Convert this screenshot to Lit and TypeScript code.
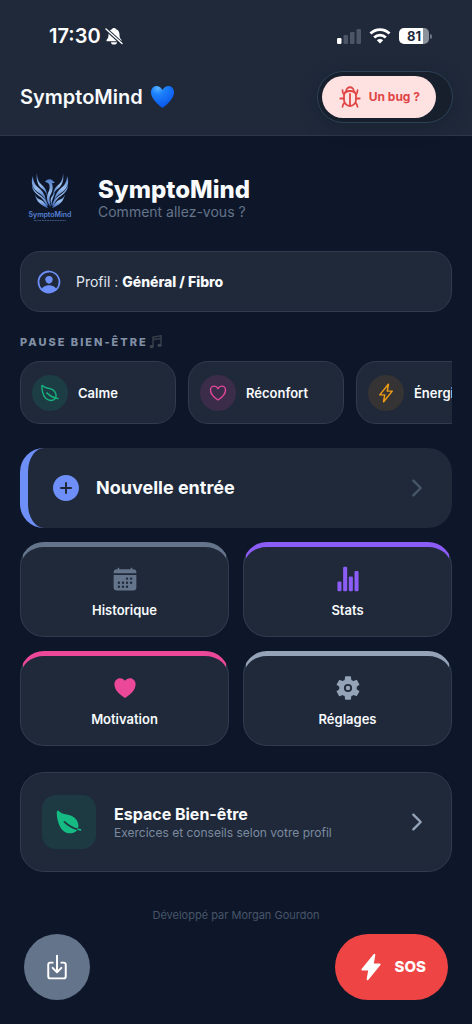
import { LitElement, html, css, svg } from "lit";
import { customElement, property } from "lit/decorators.js";
import { classMap } from "lit/directives/class-map.js";

const line = (d: string, width = 32) => svg`<path d=${d} fill="none" stroke="currentColor"
  stroke-width=${width} stroke-linecap="round" stroke-linejoin="round"></path>`;
const fill = (d: string) => svg`<path d=${d} fill="currentColor" fill-rule="evenodd"></path>`;
const dot = (x: number, y: number) => `M${x - 24} ${y}a24 24 0 1048 0a24 24 0 10-48 0z`;

const ICONS: Record<string, unknown> = {
  bug: svg`${line("M370 378c28.89 23.52 46 46.07 46 86M142 378c-28.89 23.52-46 46.06-46 86M384 208c28.89-23.52 32-56.07 32-96M128 206c-28.89-23.52-32-54.06-32-94M464 288.13h-80M128 288.13H48M256 192v256", 38)}
    ${line("M256 448h0c-70.4 0-128-57.6-128-128v-96.07c0-65.07 57.6-96 128-96h0c70.4 0 128 25.6 128 96V320c0 70.4-57.6 128-128 128z", 38)}
    ${line("M179.43 143.52A49.08 49.08 0 01176 127.79 80 80 0 01255.79 48h.42A80 80 0 01336 127.79a41.91 41.91 0 01-3.12 14.3", 38)}`,
  person: svg`${fill("M258.9 48C141.92 46.42 46.42 141.92 48 258.9c1.56 112.19 92.91 203.54 205.1 205.1 117 1.6 212.48-93.9 210.88-210.88C462.44 140.91 371.09 49.56 258.9 48zm126.42 327.25a4 4 0 01-6.14-.32 124.27 124.27 0 00-32.35-29.59C321.37 329 289.11 320 256 320s-65.37 9-90.83 25.34a124.24 124.24 0 00-32.35 29.58 4 4 0 01-6.14.32A175.32 175.32 0 0180 259c-1.63-97.31 78.22-178.76 175.57-179S432 158.81 432 256a175.32 175.32 0 01-46.68 119.25z")}
    ${fill("M125 378C150 336 200 318 256 318s106 18 131 60C350 415 305 434 256 434s-94-19-131-56z")}
    ${fill("M256 144c-19.72 0-37.55 7.39-50.22 20.82s-19 32-17.57 51.93C191.11 256 221.52 288 256 288s64.83-32 67.79-71.24c1.48-19.74-4.8-38.14-17.68-51.82C293.39 151.44 275.59 144 256 144z")}`,
  leafLine: line("M321.89 171.42C233 114 141 155.22 56 65.22c-19.8-21-8.3 235.5 98.1 332.7 77.79 71 197.9 63.08 238.4-5.92s18.28-163.17-70.61-220.58zM173 253c86 81 175 129 292 147", 36),
  leaf: svg`${fill("M161.35 242a16 16 0 0122.62-.68c73.63 69.36 147.51 111.56 234.45 133.07 11.73-32 12.77-67.22 2.64-101.58-13.44-45.59-44.74-85.31-90.49-114.86-40.84-26.38-81.66-33.25-121.15-39.89-49.82-8.38-96.88-16.3-141.79-63.85-5-5.26-11.81-7.37-18.32-5.66-7.44 2-12.43 7.88-14.82 17.6-5.6 22.75-2 86.51 13.75 153.82 25.29 108.14 65.65 162.86 95.06 189.73 38 34.69 87.62 53.9 136.93 53.9a186 186 0 0027.77-2.04c41.71-6.32 76.43-27.27 96-57.75-89.49-23.28-165.94-67.55-242-139.16a16 16 0 01-.65-22.65z")}
    ${fill("M467.43 384.19c-16.83-2.59-33.13-5.84-49-9.77a157.71 157.71 0 01-12.13 25.68c-.73 1.25-1.5 2.49-2.29 3.71a584.21 584.21 0 0058.56 12 16 16 0 104.87-31.62z")}`,
  heartLine: line("M352.92 80C288 80 256 144 256 144s-32-64-96.92-64c-52.76 0-94.54 44.14-95.08 96.81-1.1 109.33 86.73 187.08 183 252.42a16 16 0 0018 0c96.26-65.34 184.09-143.09 183-252.42-.54-52.67-42.32-96.81-95.08-96.81z", 36),
  heart: fill("M256 448a32 32 0 01-18-5.57c-78.59-53.35-112.62-89.93-131.39-112.8-40-48.75-59.15-98.8-58.61-153C48.63 114.52 98.46 64 159.08 64c44.08 0 74.61 24.83 92.39 45.51a6 6 0 009.06 0C278.31 88.81 308.84 64 352.92 64c60.62 0 110.45 50.52 111.08 112.64.54 54.21-18.63 104.26-58.61 153-18.77 22.87-52.8 59.45-131.39 112.8a32 32 0 01-18 5.56z"),
  flashLine: line("M315.27 33L96 304h128l-31.51 173.23a2.36 2.36 0 002.33 2.77h0a2.36 2.36 0 001.89-.95L416 208H288l31.66-173.25a2.45 2.45 0 00-2.44-2.75h0a2.42 2.42 0 00-1.95 1z", 38),
  flash: fill("M194.82 496a18.36 18.36 0 01-18.1-21.53v-.11L204.83 320H96a16 16 0 01-12.44-26.06L302.73 23a18.45 18.45 0 0132.8 13.71c0 .3-.08.59-.13.89L307.19 192H416a16 16 0 0112.44 26.06L209.24 489a18.45 18.45 0 01-14.42 7z"),
  add: fill("M256 48C141.31 48 48 141.31 48 256s93.31 208 208 208 208-93.31 208-208S370.69 48 256 48zm80 224h-64v64a16 16 0 01-32 0v-64h-64a16 16 0 010-32h64v-64a16 16 0 0132 0v64h64a16 16 0 010 32z"),
  chevron: line("M184 112l144 144-144 144", 48),
  stats: fill("M104 496H72a24 24 0 01-24-24V328a24 24 0 0124-24h32a24 24 0 0124 24v144a24 24 0 01-24 24zM328 496h-32a24 24 0 01-24-24V232a24 24 0 0124-24h32a24 24 0 0124 24v240a24 24 0 01-24 24zM440 496h-32a24 24 0 01-24-24V120a24 24 0 0124-24h32a24 24 0 0124 24v352a24 24 0 01-24 24zM216 496h-32a24 24 0 01-24-24V40a24 24 0 0124-24h32a24 24 0 0124 24v432a24 24 0 01-24 24z"),
  calendar: svg`${fill("M480 128a64 64 0 00-64-64h-16V48.45c0-8.61-6.62-16-15.23-16.43A16 16 0 00368 48v16H144V48.45c0-8.61-6.62-16-15.23-16.43A16 16 0 00112 48v16H96a64 64 0 00-64 64v12a4 4 0 004 4h440a4 4 0 004-4z")}
    ${fill(
      "M32 416a64 64 0 0064 64h320a64 64 0 0064-64V179a3 3 0 00-3-3H35a3 3 0 00-3 3z" +
        [[296, 248], [376, 248], [136, 328], [216, 328], [296, 328], [376, 328], [136, 408], [216, 408], [296, 408]]
          .map(([x, y]) => dot(x, y))
          .join("")
    )}`,
  settings: svg`${fill("M256 176a80 80 0 1080 80 80.24 80.24 0 00-80-80zm172.72 80a165.53 165.53 0 01-1.64 22.34l48.69 38.15a11.59 11.59 0 012.63 14.78l-46.06 79.52a11.64 11.64 0 01-14.14 4.93l-57.25-23a176.56 176.56 0 01-38.82 22.67l-8.56 60.78a11.93 11.93 0 01-11.51 9.86h-92.12a12 12 0 01-11.51-9.53l-8.56-60.78A169.3 169.3 0 01151.05 393L93.8 416a11.64 11.64 0 01-14.14-4.92L33.6 331.57a11.59 11.59 0 012.63-14.78l48.69-38.15A174.58 174.58 0 0183.28 256a165.53 165.53 0 011.64-22.34l-48.69-38.15a11.59 11.59 0 01-2.63-14.78l46.06-79.52a11.64 11.64 0 0114.14-4.93l57.25 23a176.56 176.56 0 0138.82-22.67l8.56-60.78A11.93 11.93 0 01209.94 26h92.12a12 12 0 0111.51 9.53l8.56 60.78A169.3 169.3 0 01361 119l57.2-23a11.64 11.64 0 0114.14 4.92l46.06 79.52a11.59 11.59 0 01-2.63 14.78l-48.69 38.15a174.58 174.58 0 011.64 22.63z")}
    <circle cx="256" cy="256" r="44" fill="currentColor"></circle>`,
  download: svg`${line("M336 176h40a40 40 0 0140 40v208a40 40 0 01-40 40H136a40 40 0 01-40-40V216a40 40 0 0140-40h40", 36)}
    ${line("M176 272l80 80 80-80M256 48v288", 36)}`,
};

@customElement("app-icon")
class AppIcon extends LitElement {
  @property() name = "";
  static styles = css`
    :host { display: block; flex: none; width: 24px; height: 24px; }
    svg { display: block; width: 100%; height: 100%; }
  `;
  render() {
    return html`<svg viewBox="0 0 512 512" aria-hidden="true">${ICONS[this.name]}</svg>`;
  }
}

@customElement("status-bar")
class StatusBar extends LitElement {
  static styles = css`
    :host { display: flex; justify-content: space-between; align-items: center; height: 24px; padding: 0 40px 0 49px; color: #fff; }
    .side { display: flex; align-items: center; }
    .left { gap: 4px; }
    .right { gap: 8px; }
    .time { font-size: 20px; line-height: 24px; font-weight: 600; }
    .cell { display: flex; align-items: center; gap: 1px; }
    .battery { width: 30px; height: 16px; line-height: 16px; border-radius: 5px; text-align: center; font-size: 13px; font-weight: 700;
      color: #1e293b; background: linear-gradient(90deg, #fff 81%, #8b929c 81%); }
    .nub { width: 2px; height: 5px; border-radius: 0 2px 2px 0; background: #6b7482; }
    svg { display: block; }
  `;
  render() {
    return html`
      <div class="side left">
        <span class="time">17:30</span>
        <svg width="18" height="18" viewBox="0 0 18 18" role="img" aria-label="Silencieux">
          <path fill="#fff" d="M9 1a2.200 2.200 0 0 1 2.100 1.300C13.500 3.200 14.500 5 14.500 7.500c0 3 .6 4 1.800 5.200.6.6.2 1.600-.7 1.600H2.400c-.9 0-1.200-1-.7-1.600 1.200-1.200 1.800-2.200 1.800-5.200 0-2.500 1-4.300 3.400-5.200A2.200 2.200 0 0 1 9 1zM6 15.200h6a3 2.400 0 0 1-6 0z"></path>
          <path stroke="#1f293a" stroke-width="3.400" d="M0 1.200l17.500 16"></path>
          <path stroke="#fff" stroke-width="1.400" stroke-linecap="round" d="M1 2l16 14.500"></path>
        </svg>
      </div>
      <div class="side right">
        <svg width="24" height="16" viewBox="0 0 24 16" role="img" aria-label="Réseau">
          <rect x="0" y="10" width="4.500" height="6" rx="1.200" fill="#fff"></rect>
          <g fill="#4b5564">
            <rect x="6.500" y="7" width="4.500" height="9" rx="1.200"></rect>
            <rect x="13" y="4" width="4.500" height="12" rx="1.200"></rect>
            <rect x="19.500" y="1" width="4.500" height="15" rx="1.200"></rect>
          </g>
        </svg>
        <svg width="22" height="16" viewBox="0 0 22 16" role="img" aria-label="Wi-Fi">
          <g fill="none" stroke="#fff" stroke-width="2.800">
            <path d="M1.500 5.600a13.500 13.500 0 0 1 19 0"></path>
            <path d="M5.200 9.500a8.200 8.200 0 0 1 11.600 0"></path>
          </g>
          <path fill="#fff" d="M11 15.500l-3.200-3.200a4.500 4.500 0 0 1 6.400 0z"></path>
        </svg>
        <div class="cell"><div class="battery">81</div><div class="nub"></div></div>
      </div>
    `;
  }
}

@customElement("app-logo")
class AppLogo extends LitElement {
  static styles = css`
    :host { display: block; flex: none; width: 60px; height: 60px; }
    svg { display: block; width: 100%; height: 100%; font-family: Inter, sans-serif; }
  `;
  render() {
    const wing = svg`
      <path d="M13 10c-3 7 0 13 6 17 3 2 5 4 7 8-1-6-3-9-6-12-4-3-7-7-7-13z"></path>
      <path d="M12 19c0 5 3 8 7 11 3 2 5 4 7 9l2 1c-1-6-4-8-8-11-3-2-6-5-8-10z"></path>
      <path d="M15 28c1 4 4 5 6 6 2 1 5 4 7 8-6-2-12-6-13-14z"></path>
      <path d="M17 7c0 6 2 10 6 13 3 3 4 6 4 10-1-4-3-6-6-8-4-4-5-9-4-15z"></path>`;
    return html`<svg viewBox="0 0 60 60" role="img" aria-label="Logo SymptoMind">
      <defs><linearGradient id="feather" x1="0" y1="0" x2="0" y2="1">
        <stop offset="0" stop-color="#4d7cc8"></stop><stop offset="0.5" stop-color="#98bdec"></stop><stop offset="1" stop-color="#3c67bd"></stop>
      </linearGradient></defs>
      <g fill="url(#feather)">
        <g>${wing}</g>
        <g transform="matrix(-1 0 0 1 60 0)">${wing}</g>
        <path d="M25 16c1-3 6-4 8-1l2 2h-3c1 4 1 7-1 11-2 3-2 7 0 13-4-4-5-9-3-14 2-4 2-6 1-9-1-1-2-2-4-2z"></path>
        <path d="M35 26c-1 6-4 7-3 14-3-6-1-9 3-14z"></path>
      </g>
      <text x="30" y="51" text-anchor="middle" font-size="7" font-weight="600" fill="#5680d6">SymptoMind</text>
      <path d="M14 54.500h32" stroke="#3c5176" stroke-width="1" stroke-dasharray="2 .6"></path>
    </svg>`;
  }
}

@customElement("app-root")
class AppRoot extends LitElement {
  static styles = css`
    :host { display: flex; flex-direction: column; box-sizing: border-box; min-height: 100vh; background: #0e1729; color: #f8fafc;
      font-family: Inter, "Noto Sans", sans-serif; font-size: 14px; line-height: 20px; }
    * { box-sizing: border-box; }
    button { font: inherit; color: inherit; margin: 0; cursor: pointer; text-align: left; border: 0; }
    h1, h2, p { margin: 0; }

    .top { padding: 24px 19px 12px 20px; border-bottom: 1px solid #2b384b; background: #1f293a; }
    .top status-bar { margin: 0 -19px 0 -20px; }
    .bar { display: flex; align-items: center; justify-content: space-between; margin-top: 23px; }
    .brand { display: flex; align-items: center; gap: 7px; font-size: 20px; line-height: 24px; font-weight: 600; }
    .brand svg { display: block; }
    .shell { padding: 4px 16px 4px 4px; border: 1px solid #2c4256; border-radius: 26px; background: #171e2c; box-shadow: 0 4px 16px #1a2333; }
    .bug { display: flex; align-items: center; gap: 7px; height: 42px; padding: 0 16px; border-radius: 21px;
      background: #fee2e2; color: #e04545; font-size: 12px; font-weight: 700; }

    main { display: flex; flex-direction: column; padding: 30px 20px 0 20px; }
    .hero { display: flex; align-items: center; gap: 18px; }
    .hero h1 { padding-top: 4px; font-size: 24px; line-height: 28px; font-weight: 800; }
    .hero p { font-size: 14px; line-height: 16px; color: #64748b; }

    .card { border: 1px solid #2f3c4e; background: #1f293a; }
    .profile { display: flex; align-items: center; gap: 13px; height: 61px; margin-top: 25px; padding: 0 14px; border-radius: 20px; color: #e2e8f0; }
    .profile strong { font-weight: 800; color: #f8fafc; }
    .blue { color: #6e8ff8; }
    .i20 { width: 20px; height: 20px; }
    .i26 { width: 26px; height: 26px; }
    .i28 { width: 28px; height: 28px; }
    .i32 { width: 32px; height: 32px; }

    .label { display: flex; align-items: center; gap: 1px; margin-top: 22px; font-size: 11px; line-height: 16px; font-weight: 800; letter-spacing: 2px; color: #8290a6; }
    .label svg { display: block; }
    .chips { display: flex; gap: 12px; margin-top: 11px; overflow-x: auto; scrollbar-width: none; }
    .chip { display: flex; flex: none; align-items: center; gap: 10px; width: 156px; height: 63px; padding: 0 11px; border-radius: 20px; font-size: 13px; font-weight: 600; }
    .disc { display: grid; flex: none; place-items: center; width: 36px; height: 36px; border-radius: 50%; }
    .calm { color: #17b27e; background: #1d3d45; }
    .comfort { color: #e0489a; background: #3b2c49; }
    .energy { color: #ee9c14; background: #363334; }

    .entry { display: flex; align-items: center; gap: 14px; height: 80px; margin-top: 24px; padding: 0 22px; border-left: 8px solid #6e8ff8; border-radius: 24px;
      background: #1f293a; font-size: 18px; line-height: 24px; font-weight: 700; }
    .grow { flex: 1; }
    .dim { color: #475569; }
    .soft { color: #94a3b8; }

    .tiles { display: grid; grid-template-columns: 1fr 1fr; gap: 14px; margin-top: 14px; }
    .tile { display: flex; flex-direction: column; align-items: center; gap: 8px; height: 95px; padding: 19px 0 0 0; border-top-width: 5px; border-radius: 24px; font-size: 13px; font-weight: 600; }
    .slate { border-top-color: #64748b; }
    .slate app-icon { color: #64748b; }
    .violet { border-top-color: #8b5cf6; }
    .violet app-icon { color: #8b5cf6; }
    .pink { border-top-color: #ec4899; }
    .pink app-icon { color: #ec4899; }
    .grey { border-top-color: #94a3b8; }
    .grey app-icon { color: #94a3b8; }

    .space { display: flex; align-items: center; gap: 18px; height: 100px; margin-top: 26px; padding: 0 21px; border-radius: 24px; }
    .square { display: grid; flex: none; place-items: center; width: 54px; height: 54px; border-radius: 14px; color: #15bb82; background: #1d3a43; }
    .space h2 { padding-top: 2px; font-size: 16px; line-height: 20px; font-weight: 700; }
    .space p { font-size: 12px; line-height: 18px; color: #7c8a9f; }

    .credit { margin-top: 34px; text-align: center; font-size: 11px; line-height: 18px; color: #475569; }
    .actions { display: flex; justify-content: space-between; margin-top: 10px; padding: 0 24px 24px 24px; }
    .save { display: grid; place-items: center; width: 66px; height: 66px; padding: 0; border-radius: 50%; background: #64748b; color: #fff; }
    .sos { display: flex; align-items: center; gap: 10px; height: 66px; padding: 0 22px; border-radius: 33px; background: #ef4444; color: #fff; font-size: 15px; font-weight: 800; }
  `;

  private chips = [
    { label: "Calme", icon: "leafLine", tone: "calm" },
    { label: "Réconfort", icon: "heartLine", tone: "comfort" },
    { label: "Énergie", icon: "flashLine", tone: "energy" },
  ];

  private tiles = [
    { label: "Historique", icon: "calendar", tone: "slate" },
    { label: "Stats", icon: "stats", tone: "violet" },
    { label: "Motivation", icon: "heart", tone: "pink" },
    { label: "Réglages", icon: "settings", tone: "grey" },
  ];

  render() {
    return html`
      <header class="top">
        <status-bar></status-bar>
        <div class="bar">
          <div class="brand">
            <span>SymptoMind</span>
            <svg width="25" height="24" viewBox="0 0 25 24" role="img" aria-label="Cœur bleu">
              <defs><radialGradient id="heart" cx="0.3" cy="0.1" r="0.9">
                <stop offset="0" stop-color="#58b4ff"></stop><stop offset="0.3" stop-color="#1e84fb"></stop><stop offset="1" stop-color="#0a55ec"></stop>
              </radialGradient></defs>
              <path fill="url(#heart)" d="M12.500 5C11 2.300 8.900 1 6.600 1 3.400 1 1 3.700 1 7.300 1 13 6.500 18.500 12.500 23 18.500 18.500 24 13 24 7.300 24 3.700 21.600 1 18.400 1c-2.300 0-4.400 1.300-5.900 4z"></path>
            </svg>
          </div>
          <div class="shell">
            <button class="bug"><app-icon name="bug"></app-icon>Un bug ?</button>
          </div>
        </div>
      </header>

      <main>
        <section class="hero">
          <app-logo></app-logo>
          <div>
            <h1>SymptoMind</h1>
            <p>Comment allez-vous ?</p>
          </div>
        </section>

        <button class="card profile">
          <app-icon class="i28 blue" name="person"></app-icon>
          <span>Profil : <strong>Général / Fibro</strong></span>
        </button>

        <h2 class="label">
          PAUSE BIEN-ÊTRE
          <svg width="14" height="14" viewBox="0 0 14 14" role="img" aria-label="Musique">
            <path fill="none" stroke="#343b46" stroke-width="1.600" d="M4 11V2.200l8-1.400v9M4 4.800l8-1.400"></path>
            <ellipse cx="2.700" cy="11.600" rx="2.100" ry="1.600" fill="#3d444f"></ellipse>
            <ellipse cx="10.600" cy="10.300" rx="2.100" ry="1.600" fill="#3d444f"></ellipse>
          </svg>
        </h2>
        <div class="chips">
          ${this.chips.map(
            (c) => html`<button class="card chip">
              <span class=${classMap({ disc: true, [c.tone]: true })}><app-icon class="i20" name=${c.icon}></app-icon></span>
              ${c.label}
            </button>`
          )}
        </div>

        <button class="entry">
          <app-icon class="i32 blue" name="add"></app-icon>
          <span class="grow">Nouvelle entrée</span>
          <app-icon class="i26 dim" name="chevron"></app-icon>
        </button>

        <div class="tiles">
          ${this.tiles.map(
            (t) => html`<button class=${classMap({ card: true, tile: true, [t.tone]: true })}>
              <app-icon class="i26" name=${t.icon}></app-icon>${t.label}
            </button>`
          )}
        </div>

        <button class="card space">
          <span class="square"><app-icon class="i28" name="leaf"></app-icon></span>
          <div class="grow">
            <h2>Espace Bien-être</h2>
            <p>Exercices et conseils selon votre profil</p>
          </div>
          <app-icon class="i26 soft" name="chevron"></app-icon>
        </button>

        <p class="credit">Développé par Morgan Gourdon</p>
      </main>

      <div class="actions">
        <button class="save" aria-label="Installer"><app-icon class="i28" name="download"></app-icon></button>
        <button class="sos"><app-icon class="i28" name="flash"></app-icon>SOS</button>
      </div>
    `;
  }
}
